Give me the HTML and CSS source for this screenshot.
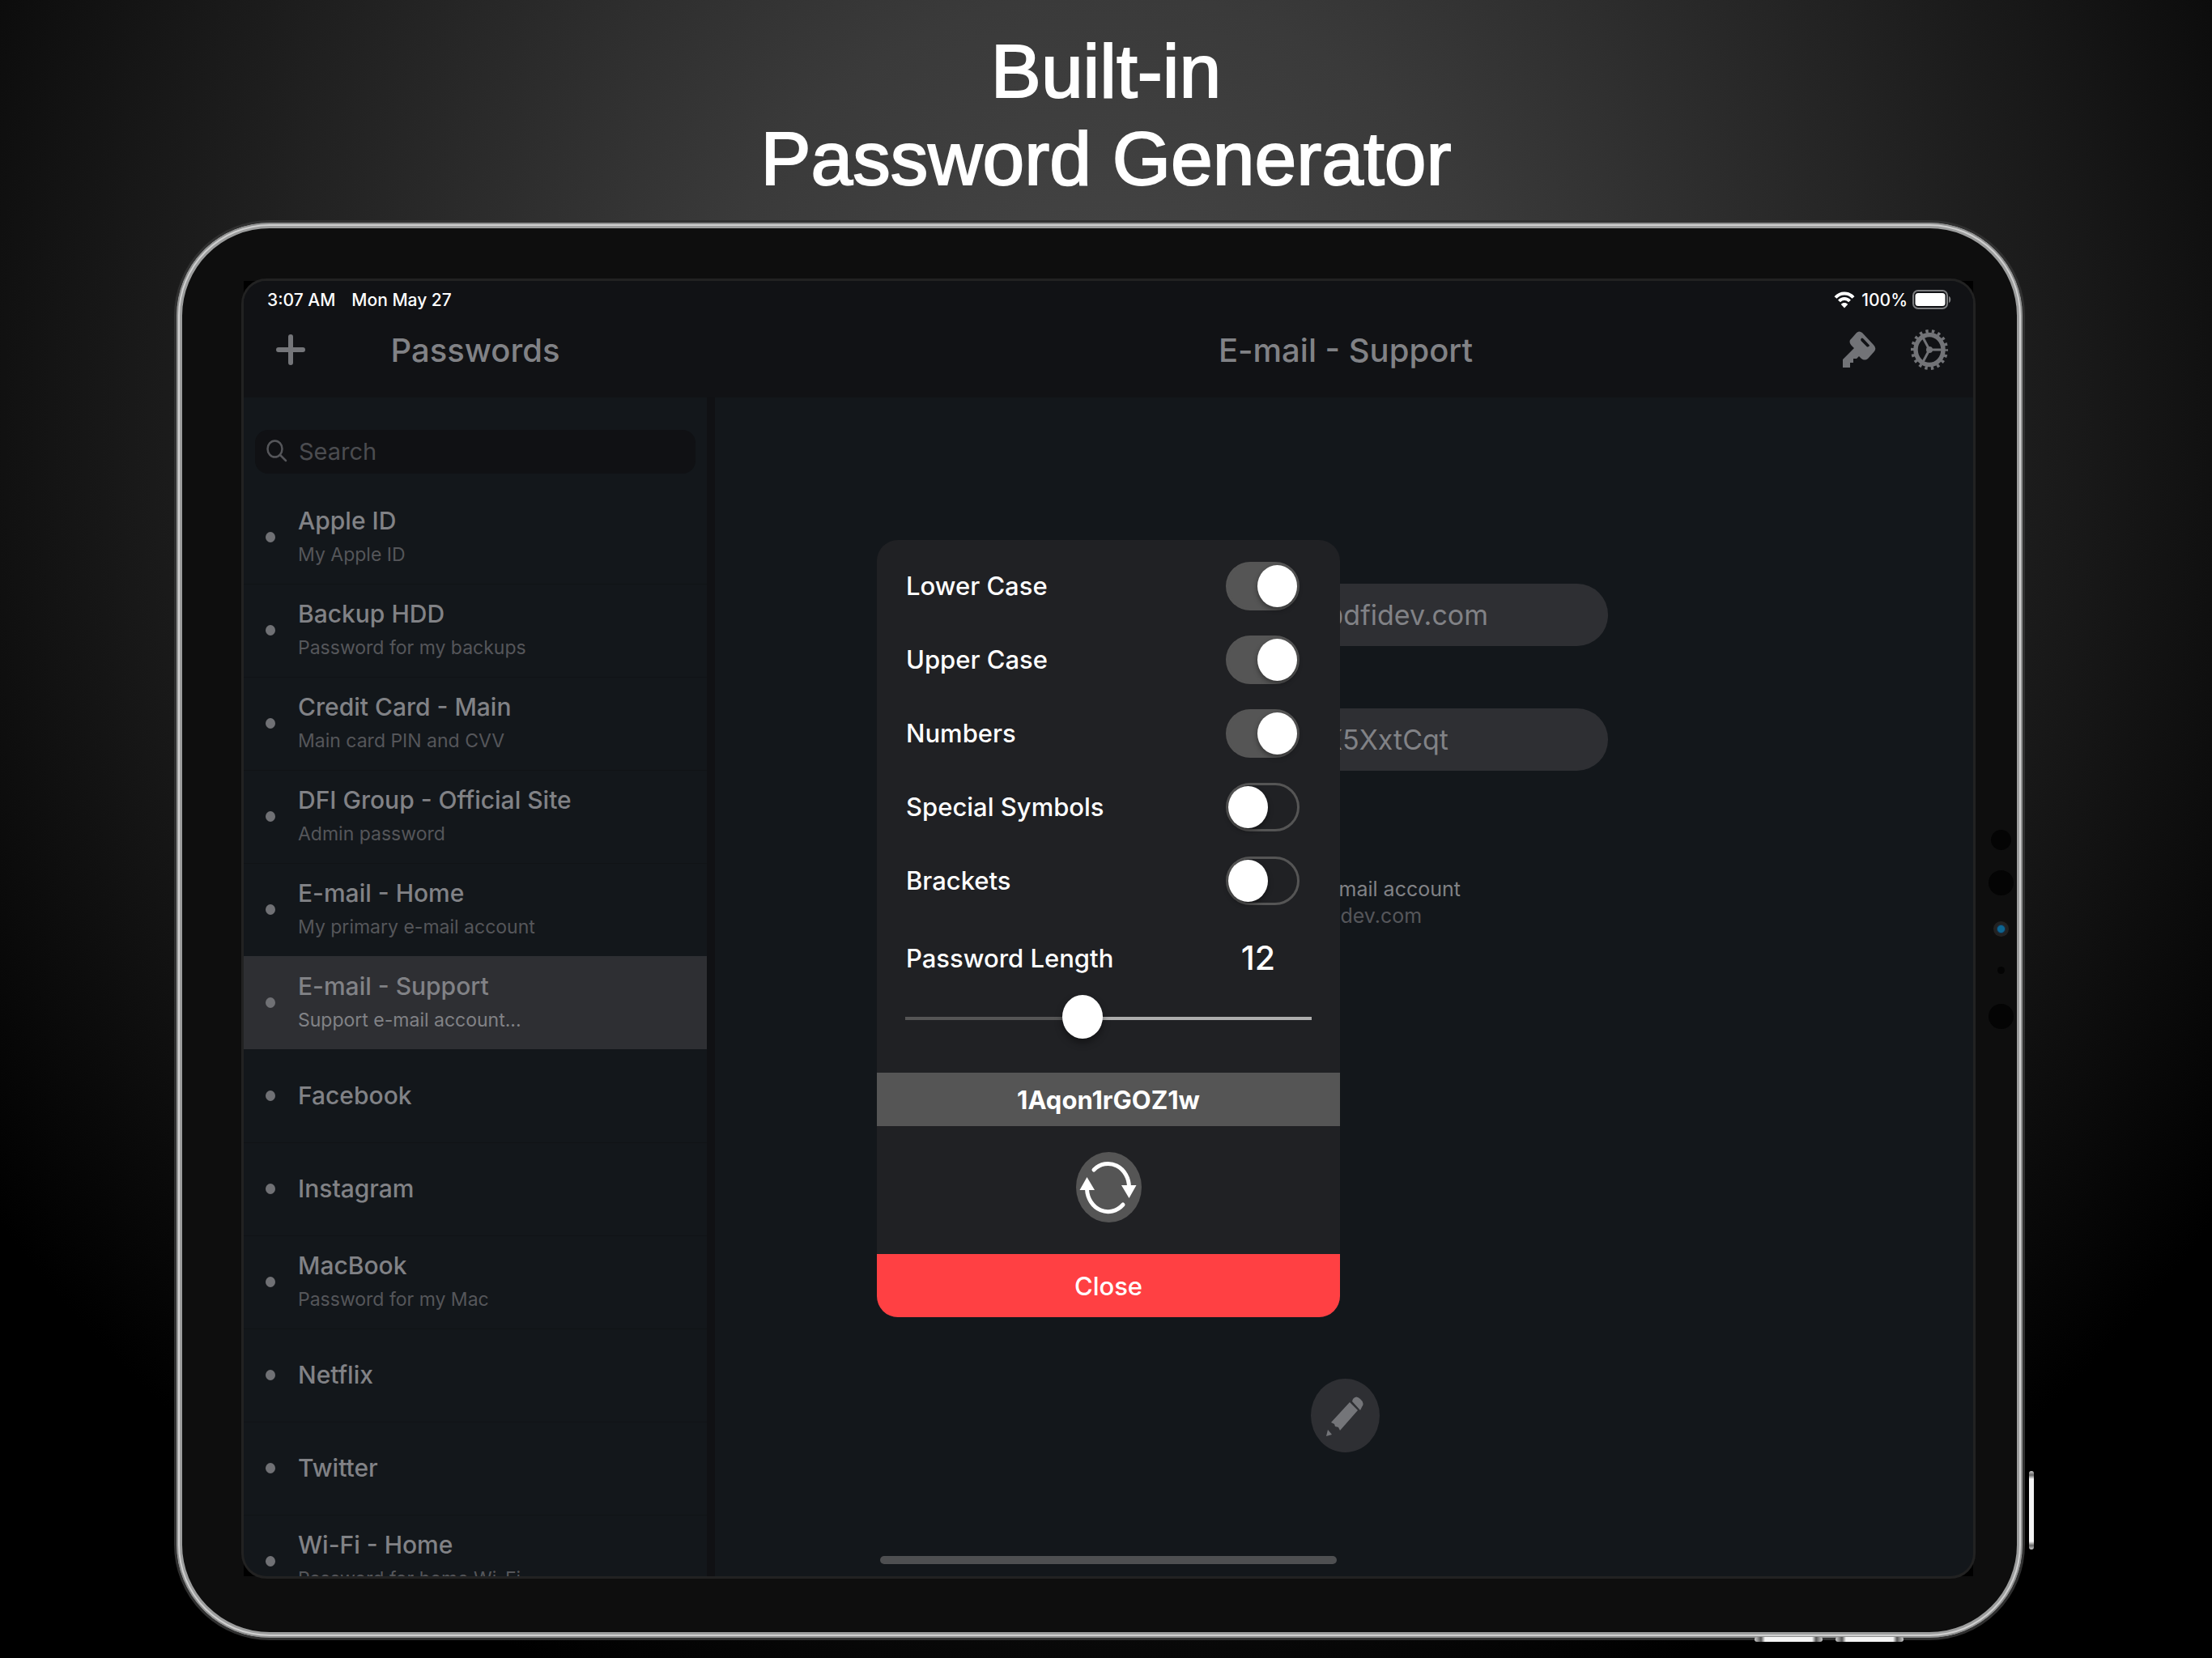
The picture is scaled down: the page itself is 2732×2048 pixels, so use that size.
FILE: index.html
```html
<!DOCTYPE html>
<html lang="en">
<head>
<meta charset="utf-8">
<title>Built-in Password Generator</title>
<link rel="stylesheet" href="styles.css">
</head>
<body>
<h1 class="headline">Built-in<br>Password Generator</h1>
<main class="tablet">
  <span class="hw hw-power"></span>
  <span class="hw hw-vol hw-up"></span>
  <span class="hw hw-vol hw-down"></span>
  <div class="sensors">
    <i class="sensor s-md"></i><i class="sensor s-lg"></i><i class="sensor s-cam"></i><i class="sensor s-sm"></i><i class="sensor s-lg2"></i>
  </div>
  <div class="bezel">
  <div class="screen">
    <header class="top">
      <div class="status">
        <span>3:07 AM</span><span class="date">Mon May 27</span>
        <svg class="wifi" width="26" height="21" viewBox="0 0 26 21"><g fill="none" stroke="#fff" stroke-width="4"><path d="M2 7.500C8 .8 18 .8 24 7.500"/><path d="M6.500 12c3.700-4 9.300-4 13 0"/></g><path d="M8.800 16c2.400-2.600 6-2.600 8.400 0L13 20.500z" fill="#fff"/></svg>
        <span>100%</span>
        <svg class="battery" width="48" height="24" viewBox="0 0 48 24"><rect x="1" y="1" width="42" height="22" rx="6" fill="none" stroke="#7d7e80" stroke-width="2"/><rect x="3.500" y="4" width="37" height="16" rx="3.500" fill="#fff"/><path d="M45 8c3 1 3 7 0 8z" fill="#7d7e80"/></svg>
      </div>
      <div class="bars">
        <div class="bar bar-side">
          <button class="icon-btn add" aria-label="Add"><svg width="36" height="38" viewBox="0 0 36 38"><path d="M3 19h30M18 3v32" stroke="#747579" stroke-width="6" stroke-linecap="round"/></svg></button>
          <h2>Passwords</h2>
        </div>
        <div class="bar bar-main">
          <h2>E-mail - Support</h2>
          <div class="actions">
            <button class="icon-btn" aria-label="Generate password"><svg width="42" height="46" viewBox="0 0 42 46"><path fill="#727377" fill-rule="evenodd" d="M18 2Q21-1 25 2L39 17Q43 21 40 25L32 34Q28 37 24 34L21 31 18 34H14V39H10V45H1V35L15 21Q8 15 10 11ZM24.500 8.500Q22 10 24 12.500L31 19.500Q33.500 20 34 17.500L26.500 9.500Q25.500 8.500 24.500 8.500Z"/></svg></button>
            <button class="icon-btn" aria-label="Settings"><svg width="46" height="50" viewBox="0 0 46 50"><g fill="none" stroke="#727377"><ellipse cx="23" cy="25" rx="21" ry="23" stroke-width="4" stroke-dasharray="3.400 4.290" stroke-dashoffset="1.700"/><ellipse cx="23" cy="25" rx="17" ry="18.500" stroke-width="5.500"/><path d="M23 25h15M23 25l-8-15M23 25l-8 15" stroke-width="3"/></g><circle cx="23" cy="25" r="4" fill="#727377"/></svg></button>
          </div>
        </div>
      </div>
    </header>
    <div class="split">
      <aside class="sidebar">
        <label class="search">
          <svg width="26" height="28" viewBox="0 0 26 28"><g fill="none" stroke="#55565a" stroke-width="2.500" stroke-linecap="round"><ellipse cx="10.500" cy="11.500" rx="9" ry="10"/><path d="M17 19l7 7"/></g></svg>
          <input type="search" placeholder="Search" aria-label="Search">
        </label>
        <ul class="list">
          <li><b>Apple ID</b><small>My Apple ID</small></li>
          <li><b>Backup HDD</b><small>Password for my backups</small></li>
          <li><b>Credit Card - Main</b><small>Main card PIN and CVV</small></li>
          <li><b>DFI Group - Official Site</b><small>Admin password</small></li>
          <li><b>E-mail - Home</b><small>My primary e-mail account</small></li>
          <li class="selected"><b>E-mail - Support</b><small>Support e-mail account...</small></li>
          <li><b>Facebook</b></li>
          <li><b>Instagram</b></li>
          <li><b>MacBook</b><small>Password for my Mac</small></li>
          <li><b>Netflix</b></li>
          <li><b>Twitter</b></li>
          <li><b>Wi-Fi - Home</b><small>Password for home Wi-Fi</small></li>
        </ul>
      </aside>
      <section class="detail">
        <input class="field" value="support@dfidev.com" aria-label="Login" readonly>
        <input class="field" value="Bh28K5XxtCqt" aria-label="Password" readonly>
        <p class="note">Support e-mail account<br><span>support.dfidev.com</span></p>
        <button class="edit" aria-label="Edit"><svg width="48" height="52" viewBox="0 0 48 52"><g fill="#747579"><path d="M30 9l10 10-22 25-2-4-4-1-1-3-4-2z"/><path d="M34 5q4-5 9 0 6 5 2 10l-2 4-10-11z"/><path d="M3 43l5 6-7 2z"/></g></svg></button>
      </section>
    </div>
    <div class="home-bar"></div>
    <section class="dialog" role="dialog" aria-label="Password generator">
      <div class="options">
        <label class="option">Lower Case<input type="checkbox" checked></label>
        <label class="option">Upper Case<input type="checkbox" checked></label>
        <label class="option">Numbers<input type="checkbox" checked></label>
        <label class="option">Special Symbols<input type="checkbox"></label>
        <label class="option">Brackets<input type="checkbox"></label>
      </div>
      <div class="length"><label for="len">Password Length</label><output for="len">12</output></div>
      <input id="len" class="slider" type="range" min="0" max="100" value="43">
      <output class="result">1Aqon1rGOZ1w</output>
      <button class="refresh" aria-label="Generate again"><svg width="72" height="74" viewBox="0 0 72 74"><g fill="none" stroke="#fff" stroke-width="5" stroke-linecap="round"><path d="M18 15A26 29 0 0 1 61.500 37"/><path d="M54 58A26 29 0 0 1 9.500 39"/></g><path fill="#fff" d="M52 34h18.500l-9 16zM.5 40h18.500L9.500 24z"/></svg></button>
      <button class="close">Close</button>
    </section>
  </div>
  </div>
</main>
</body>
</html>
```
FILE: styles.css
```css
* { box-sizing: border-box; margin: 0; padding: 0; }
body {
  display: flex;
  flex-direction: column;
  height: 100vh;
  padding-bottom: 22px;
  overflow: hidden;
  background: #000 radial-gradient(circle 1700px at 50% 500px, #484848, #3a3a3a 30%, #181818 72%, #000);
  font-family: Inter, "Liberation Sans", sans-serif;
  color: #fff;
}
button, input { font: inherit; color: inherit; border: 0; background: none; }
button { display: grid; place-items: center; }
svg { display: block; }
.headline {
  padding: 34px 0 22px;
  font: 400 93px/108px "Liberation Sans", Arial, sans-serif;
  text-align: center;
  -webkit-text-stroke: 2px #fff;
}

.tablet {
  position: relative;
  display: flex;
  flex: 1;
  min-height: 0;
  margin: 0 231px 0 215px;
  padding: 62px 51px 66px 73px;
  border: 3px solid #303030;
  border-radius: 118px;
  background: #0e0e0e;
  box-shadow: inset 0 0 0 2px #909191, inset 0 0 0 4px #cfcfcf, inset 0 0 0 7px #9c9d9d;
}
.bezel { flex: 1; display: flex; min-width: 0; margin: 10px; background: #000; }
.screen { position: relative; flex: 1; min-width: 0; display: flex; flex-direction: column; overflow: hidden; border-radius: 28px; background: #13171b; box-shadow: 0 0 0 3px #222; }
.hw { position: absolute; background: linear-gradient(#ccc, #666 5px, #f4f4f4 10px, #f4f4f4 calc(100% - 10px), #666 calc(100% - 5px), #ccc); border-radius: 3px; }
.hw-power { right: -14px; bottom: 109px; width: 6px; height: 97px; }
.hw-vol { bottom: -5px; width: 84px; height: 6px; background: linear-gradient(90deg, #ccc, #555 8px, #f4f4f4 13px, #f4f4f4 calc(100% - 13px), #555 calc(100% - 8px), #ccc); }
.hw-up { right: 247px; }
.hw-down { right: 147px; }
.sensors { position: absolute; right: 11px; top: 750px; width: 31px; display: flex; flex-direction: column; align-items: center; }
.sensor { border-radius: 50%; background: #040404; }
.s-md { width: 25px; height: 25px; }
.s-lg, .s-lg2 { width: 31px; height: 31px; }
.s-lg { margin: 25px 0 32px; }
.s-lg2 { margin-top: 37px; }
.s-cam { width: 19px; height: 19px; background: radial-gradient(#0d6590 0 4px, #16304a 5px, #222 6px); }
.s-sm { width: 9px; height: 9px; margin-top: 37px; }

.top { height: 144px; background: #111215; }
.status { display: flex; align-items: center; height: 46px; padding: 0 27px 0 29px; font-size: 21px; font-weight: 500; }
.date { margin-left: 20px; }
.wifi { margin-left: auto; margin-right: 8px; }
.battery { margin-left: 6px; }
.bars { display: flex; height: 78px; color: #818286; }
.bar { position: relative; display: flex; align-items: center; justify-content: center; }
.bar h2 { font-size: 40px; font-weight: 450; }
.bar-side { width: 572px; }
.bar-main { flex: 1; margin-left: 14px; }
.add { position: absolute; left: 40px; }
.actions { position: absolute; right: 31px; display: flex; align-items: center; gap: 43px; }

.split { display: flex; flex: 1; min-height: 0; }
.sidebar { width: 582px; border-right: 10px solid #101114; overflow: hidden; }
.search { display: flex; align-items: center; gap: 14px; height: 54px; margin: 40px 14px 21px; padding: 0 14px 2px; border-radius: 16px; background: #101114; }
.search input { flex: 1; min-width: 0; font-size: 29px; appearance: none; outline: 0; }
.search input::placeholder { color: #4b4c50; opacity: 1; }
.list { list-style: none; }
.list li { position: relative; display: flex; flex-direction: column; justify-content: center; height: 115px; padding: 0 0 2px 67px; border-top: 1px solid #101316; color: #818286; }
.list li:first-child, .list .selected, .list .selected + li { border-color: transparent; }
.list li::before { content: ""; position: absolute; left: 27px; top: 50px; width: 12px; height: 13px; border-radius: 50%; background: #707175; }
.list b { font-size: 30px; line-height: 44px; font-weight: 450; }
.list small { font-size: 23px; line-height: 40px; color: #55565a; }
.list .selected { background: #2e2f33; }
.list .selected small { color: #818286; }

.detail { flex: 1; display: flex; flex-direction: column; align-items: center; padding-top: 230px; }
.field { width: 652px; height: 77px; margin-bottom: 77px; padding-left: 20px; border-radius: 38px; background: #2e2f33; color: #818286; font-size: 34px; text-align: center; }
.note { margin-top: 53px; padding-left: 10px; font-size: 25px; line-height: 33px; color: #818286; }
.note span { color: #55565a; }
.edit { width: 85px; height: 91px; margin: auto 0 153px 2px; border-radius: 50%; background: #2e2f33; }
.home-bar { position: absolute; left: 786px; right: 786px; bottom: 15px; height: 10px; border-radius: 5px; background: #4e4f51; }

.dialog { position: absolute; left: 50%; top: 50%; width: 572px; margin-left: -286px; transform: translateY(-50%); overflow: hidden; border-radius: 26px; background: #202124; font-size: 31px; font-weight: 450; }
.options { padding: 11px 50px 0 36px; }
.option { display: flex; align-items: center; justify-content: space-between; height: 91px; }
.option input { appearance: none; width: 91px; height: 60px; padding: 1px 0; border: 3px solid #555; border-radius: 30px; }
.option input::before { content: ""; display: block; width: 49px; height: 52px; border-radius: 50%; background: #fff; box-shadow: 0 3px 6px #0006; }
.option input:checked { background: #555; }
.option input:checked::before { margin-left: 36px; }
.length { display: flex; align-items: center; justify-content: space-between; height: 95px; padding: 5px 80px 0 36px; }
.length output { font-size: 41px; }
.slider { appearance: none; display: block; width: 502px; height: 54px; margin: 1px 35px 42px; background: linear-gradient(90deg, #555 43%, #adadad 43%) 0 27px / 100% 4px no-repeat; }
.slider::-webkit-slider-thumb { appearance: none; width: 50px; height: 54px; border-radius: 50%; background: #fff; box-shadow: 0 5px 10px #0006; }
.result { display: grid; place-items: center; height: 66px; background: #555; font-size: 31px; font-weight: 700; }
.refresh { width: 81px; height: 87px; margin: 32px auto 39px; border-radius: 50%; background: #555; }
.close { width: 100%; height: 78px; background: #ff4043; }
```
